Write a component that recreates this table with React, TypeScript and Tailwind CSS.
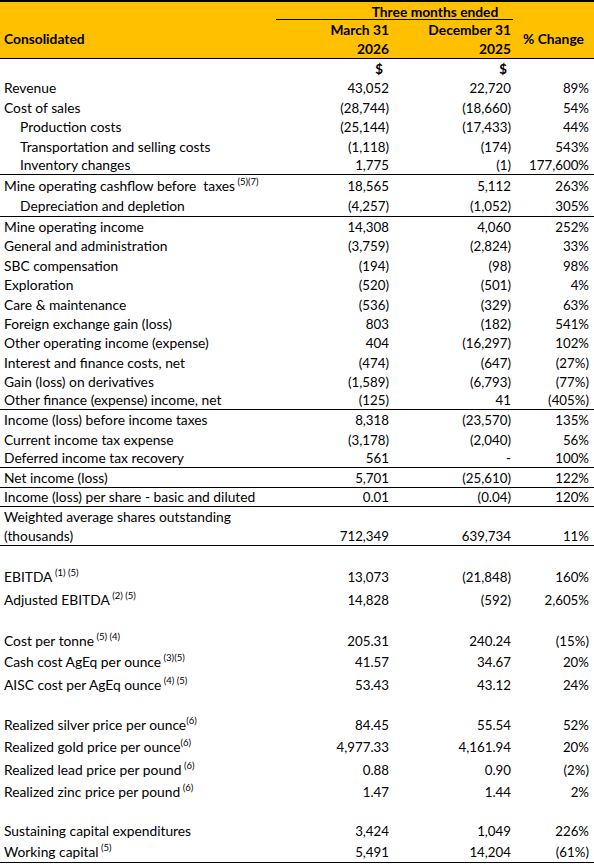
import React from "react";

type Row = {
  l: string;
  sup?: string;
  supGap?: boolean;
  ind?: boolean;
  b?: string;
  c?: string;
  d?: string;
  h: number;
  line?: boolean;
  end?: boolean;
  dollar?: boolean;
};

const rows: Row[] = [
  { l: "", b: "$", c: "$", d: "", h: 19, dollar: true },
  { l: "Revenue", b: "43,052", c: "22,720", d: "89%", h: 20 },
  { l: "Cost of sales", b: "(28,744)", c: "(18,660)", d: "54%", h: 19 },
  { l: "Production costs", ind: true, b: "(25,144)", c: "(17,433)", d: "44%", h: 20 },
  { l: "Transportation and selling costs", ind: true, b: "(1,118)", c: "(174)", d: "543%", h: 19 },
  { l: "Inventory changes", ind: true, b: "1,775", c: "(1)", d: "177,600%", h: 19, line: true },
  { l: "Mine operating cashflow before  taxes", sup: "(5)(7)", supGap: true, b: "18,565", c: "5,112", d: "263%", h: 21 },
  { l: "Depreciation and depletion", ind: true, b: "(4,257)", c: "(1,052)", d: "305%", h: 21, line: true },
  { l: "Mine operating income", b: "14,308", c: "4,060", d: "252%", h: 19 },
  { l: "General and administration", b: "(3,759)", c: "(2,824)", d: "33%", h: 20 },
  { l: "SBC compensation", b: "(194)", c: "(98)", d: "98%", h: 19 },
  { l: "Exploration", b: "(520)", c: "(501)", d: "4%", h: 20 },
  { l: "Care & maintenance", b: "(536)", c: "(329)", d: "63%", h: 19 },
  { l: "Foreign exchange gain (loss)", b: "803", c: "(182)", d: "541%", h: 19 },
  { l: "Other operating income (expense)", b: "404", c: "(16,297)", d: "102%", h: 20 },
  { l: "Interest and finance costs, net", b: "(474)", c: "(647)", d: "(27%)", h: 19 },
  { l: "Gain (loss) on derivatives", b: "(1,589)", c: "(6,793)", d: "(77%)", h: 19 },
  { l: "Other finance (expense) income, net", b: "(125)", c: "41", d: "(405%)", h: 19, line: true },
  { l: "Income (loss) before income taxes", b: "8,318", c: "(23,570)", d: "135%", h: 20 },
  { l: "Current income tax expense", b: "(3,178)", c: "(2,040)", d: "56%", h: 19 },
  { l: "Deferred income tax recovery", b: "561", c: "-", d: "100%", h: 19, line: true },
  { l: "Net income (loss)", b: "5,701", c: "(25,610)", d: "122%", h: 20, line: true },
  { l: "Income (loss) per share - basic and diluted", b: "0.01", c: "(0.04)", d: "120%", h: 19, line: true },
  { l: "Weighted average shares outstanding", h: 20 },
  { l: "(thousands)", b: "712,349", c: "639,734", d: "11%", h: 19, line: true },
  { l: "", h: 19 },
  { l: "EBITDA", sup: "(1) (5)", supGap: true, b: "13,073", c: "(21,848)", d: "160%", h: 22, end: true },
  { l: "Adjusted EBITDA", sup: "(2) (5)", supGap: true, b: "14,828", c: "(592)", d: "2,605%", h: 23, end: true },
  { l: "", h: 19 },
  { l: "Cost per tonne", sup: "(5) (4)", supGap: true, b: "205.31", c: "240.24", d: "(15%)", h: 22, end: true },
  { l: "Cash cost AgEq per ounce", sup: "(3)(5)", supGap: true, b: "41.57", c: "34.67", d: "20%", h: 21, end: true },
  { l: "AISC cost per AgEq ounce", sup: "(4) (5)", supGap: true, b: "53.43", c: "43.12", d: "24%", h: 23, end: true },
  { l: "", h: 19 },
  { l: "Realized silver price per ounce", sup: "(6)", b: "84.45", c: "55.54", d: "52%", h: 21, end: true },
  { l: "Realized gold price per ounce", sup: "(6)", b: "4,977.33", c: "4,161.94", d: "20%", h: 22, end: true },
  { l: "Realized lead price per pound", sup: "(6)", supGap: true, b: "0.88", c: "0.90", d: "(2%)", h: 23, end: true },
  { l: "Realized zinc price per pound", sup: "(6)", supGap: true, b: "1.47", c: "1.44", d: "2%", h: 22, end: true },
  { l: "", h: 19 },
  { l: "Sustaining capital expenditures", b: "3,424", c: "1,049", d: "226%", h: 20, end: true },
  { l: "Working capital", sup: "(5)", supGap: true, b: "5,491", c: "14,204", d: "(61%)", h: 22, line: true, end: true },
];

const font = { fontFamily: "Lato, 'Open Sans', sans-serif" };

function BodyRow({ r }: { r: Row }) {
  return (
    <div
      className={`grid grid-cols-[276px_117px_120px_81px] ${r.line ? "border-b border-black" : ""} ${r.end ? "items-end pb-[1px]" : "items-center"}`}
      style={{ height: r.h }}
    >
      <div className={`whitespace-pre leading-[18px] ${r.ind ? "pl-[20px]" : "pl-[4px]"}`}>
        {r.l}
        {r.sup ? (
          <span className="relative -top-[6px] text-[9.5px] leading-none">
            {r.supGap ? " " : ""}
            {r.sup}
          </span>
        ) : null}
      </div>
      <div className={`text-right text-[13.3px] leading-[18px] ${r.dollar ? "pr-[10px] font-bold" : "pr-[4px]"}`}>{r.b}</div>
      <div className={`text-right text-[13.3px] leading-[18px] ${r.dollar ? "pr-[6px] font-bold" : "pr-[2px]"}`}>{r.c}</div>
      <div className="text-right text-[13.3px] leading-[18px] pr-[5px]">{r.d}</div>
    </div>
  );
}

export default function App() {
  return (
    <div className="w-[594px] bg-white text-black text-[13.8px]" style={font}>
      <div className="h-[59px] border-t-2 border-b border-black bg-[#ffc000] font-bold">
        <div className="grid h-[18px] grid-cols-[276px_318px]">
          <div />
          <div className="relative flex items-center justify-center leading-[17px]">
            Three months ended
            <div className="absolute bottom-0 left-0 w-[237px] border-b border-black" />
          </div>
        </div>
        <div className="grid h-[38px] grid-cols-[276px_117px_120px_81px] items-center">
          <div className="pl-[4px] pt-[1px]">Consolidated</div>
          <div className="flex flex-col items-end pr-[4px] leading-[19px]">
            <span>March 31</span>
            <span>2026</span>
          </div>
          <div className="flex flex-col items-end pr-[2px] leading-[19px]">
            <span>December 31</span>
            <span>2025</span>
          </div>
          <div className="pt-[1px] text-center">% Change</div>
        </div>
      </div>
      {rows.map((r, i) => (
        <BodyRow key={i} r={r} />
      ))}
    </div>
  );
}
